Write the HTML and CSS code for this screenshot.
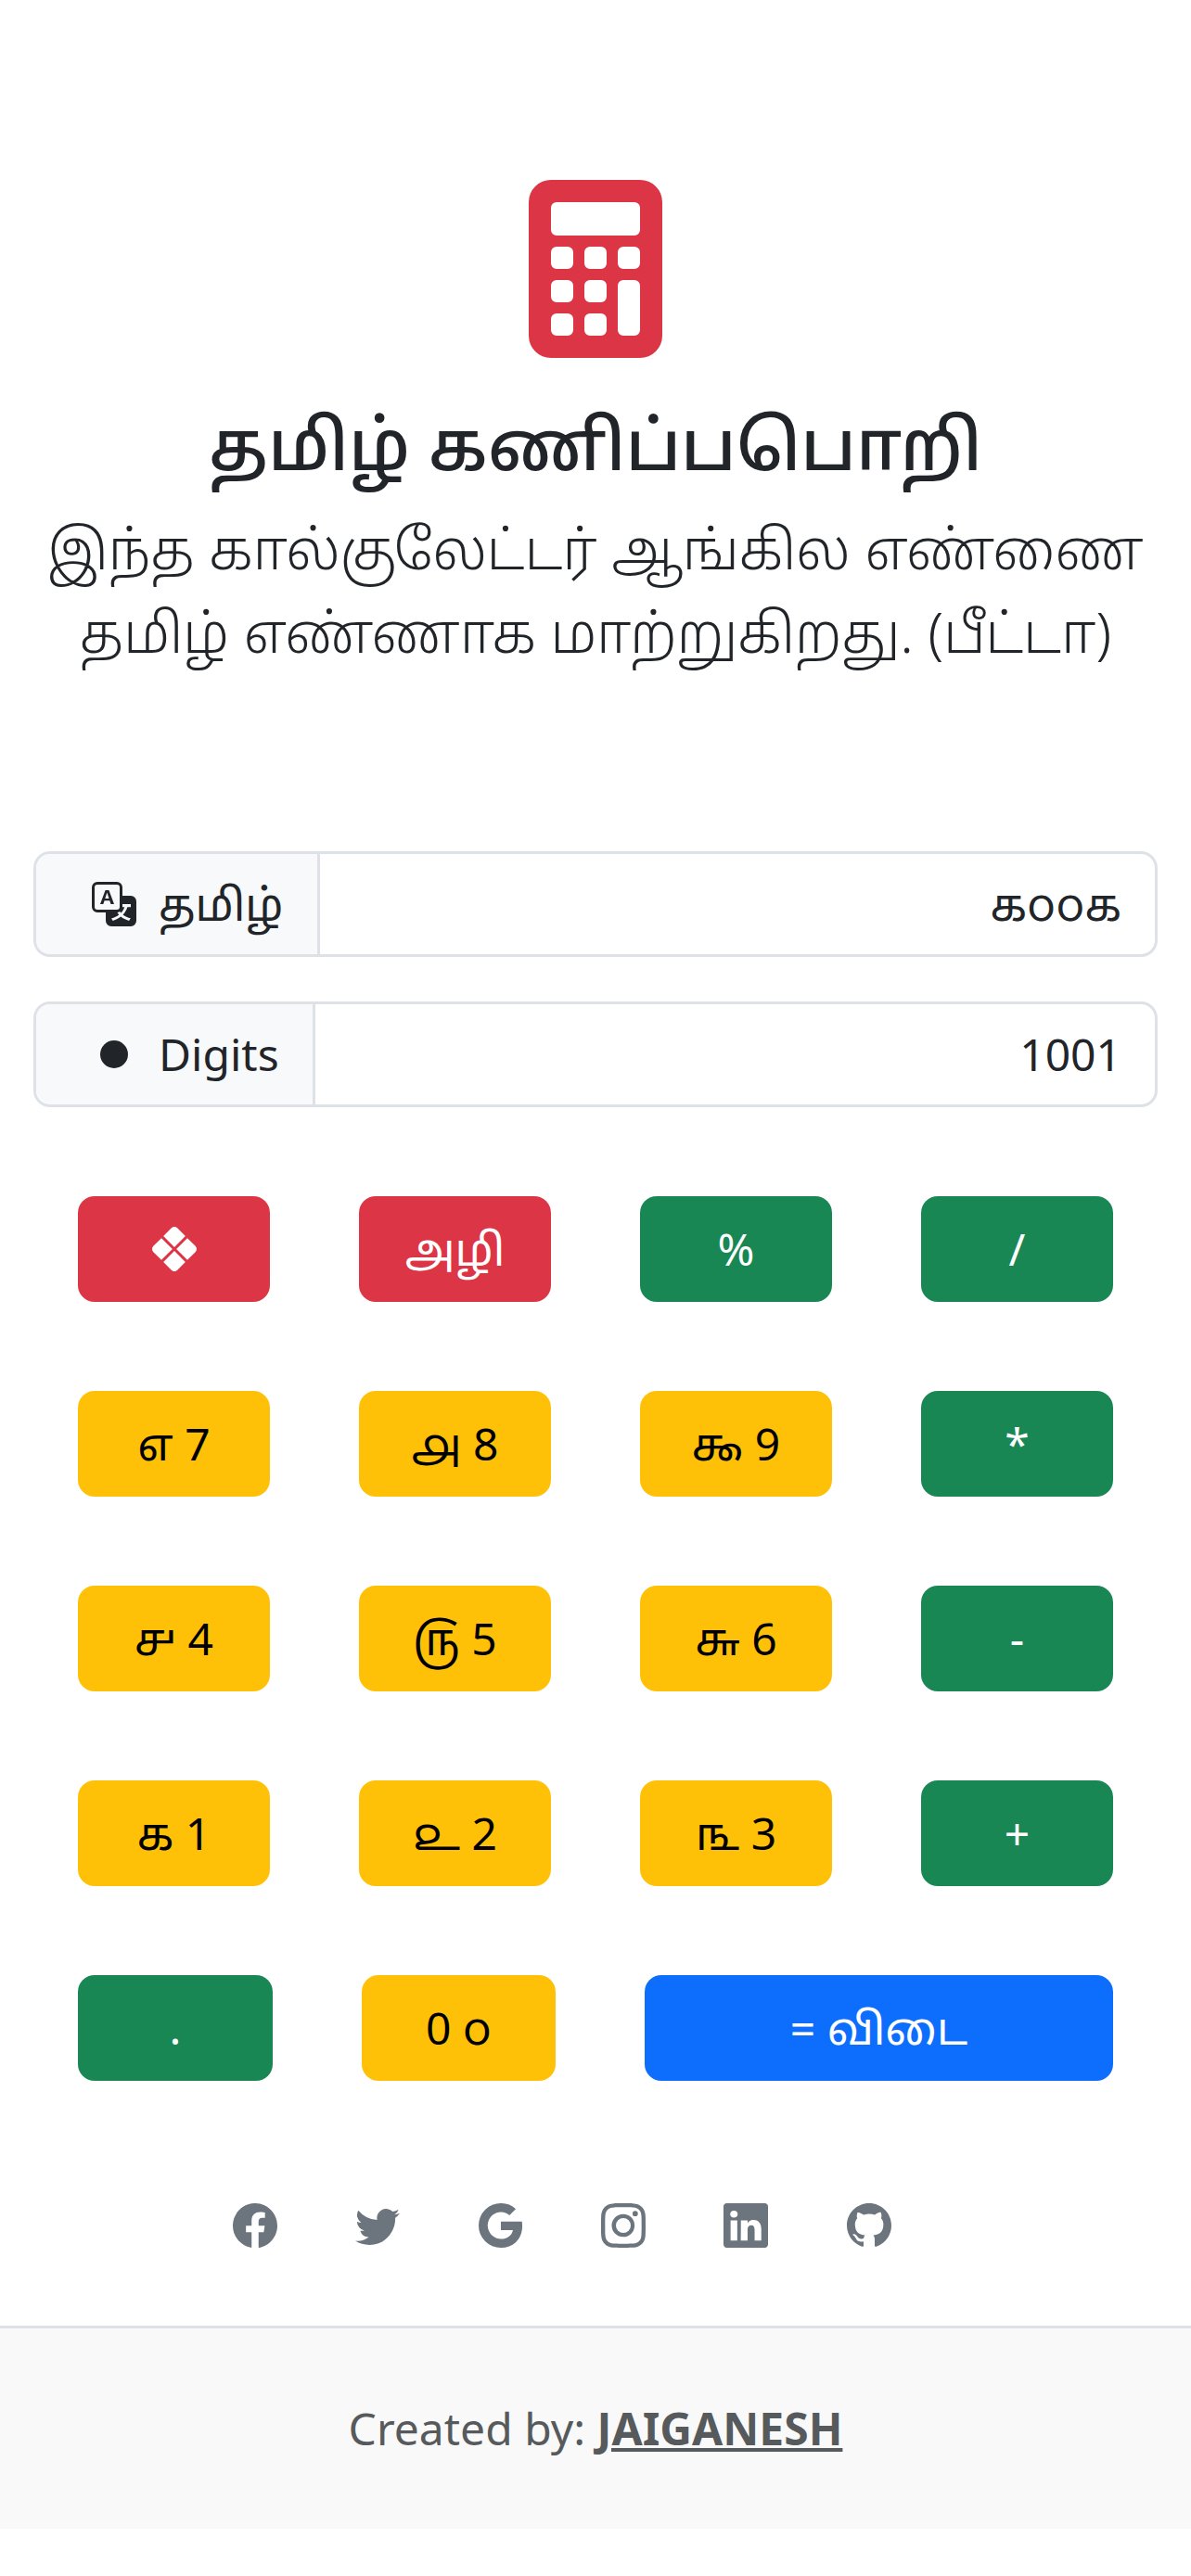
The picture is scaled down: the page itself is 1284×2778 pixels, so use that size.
FILE: index.html
```html
<!DOCTYPE html>
<html lang="ta">
<head>
<meta charset="utf-8">
<title>தமிழ் கணிப்பபொறி</title>
<link rel="stylesheet" href="styles.css">
</head>
<body>
<header class="hero">
  <svg class="hero-icon" viewBox="0 0 16 16"><path d="M2 2a2 2 0 0 1 2-2h8a2 2 0 0 1 2 2v12a2 2 0 0 1-2 2H4a2 2 0 0 1-2-2V2zm2 .5v2a.5.5 0 0 0 .5.5h7a.5.5 0 0 0 .5-.5v-2a.5.5 0 0 0-.5-.5h-7a.5.5 0 0 0-.5.5zm0 4v1a.5.5 0 0 0 .5.5h1a.5.5 0 0 0 .5-.5v-1a.5.5 0 0 0-.5-.5h-1a.5.5 0 0 0-.5.5zM4.5 9a.5.5 0 0 0-.5.5v1a.5.5 0 0 0 .5.5h1a.5.5 0 0 0 .5-.5v-1a.5.5 0 0 0-.5-.5h-1zM4 12.5v1a.5.5 0 0 0 .5.5h1a.5.5 0 0 0 .5-.5v-1a.5.5 0 0 0-.5-.5h-1a.5.5 0 0 0-.5.5zM7.5 6a.5.5 0 0 0-.5.5v1a.5.5 0 0 0 .5.5h1a.5.5 0 0 0 .5-.5v-1a.5.5 0 0 0-.5-.5h-1zM7 9.5v1a.5.5 0 0 0 .5.5h1a.5.5 0 0 0 .5-.5v-1a.5.5 0 0 0-.5-.5h-1a.5.5 0 0 0-.5.5zm.5 2.5a.5.5 0 0 0-.5.5v1a.5.5 0 0 0 .5.5h1a.5.5 0 0 0 .5-.5v-1a.5.5 0 0 0-.5-.5h-1zM10 6.5v1a.5.5 0 0 0 .5.5h1a.5.5 0 0 0 .5-.5v-1a.5.5 0 0 0-.5-.5h-1a.5.5 0 0 0-.5.5zm.5 2.5a.5.5 0 0 0-.5.5v4a.5.5 0 0 0 .5.5h1a.5.5 0 0 0 .5-.5v-4a.5.5 0 0 0-.5-.5h-1z"/></svg>
  <h1 class="title">தமிழ் கணிப்பபொறி</h1>
  <p class="lead">இந்த கால்குலேட்டர் ஆங்கில எண்ணை<br>தமிழ் எண்ணாக மாற்றுகிறது. (பீட்டா)</p>
</header>
<main>
  <section class="fields">
    <div class="field">
      <span class="addon">
        <svg class="icon" viewBox="0 0 16 16"><path d="M4.545 6.714 4.11 8H3l1.862-5h1.284L8 8H6.833l-.435-1.286H4.545zm1.634-.736L5.5 3.956h-.049l-.679 2.022H6.18z"/><path d="M0 2a2 2 0 0 1 2-2h7a2 2 0 0 1 2 2v3h3a2 2 0 0 1 2 2v7a2 2 0 0 1-2 2H7a2 2 0 0 1-2-2v-3H2a2 2 0 0 1-2-2V2zm2-1a1 1 0 0 0-1 1v7a1 1 0 0 0 1 1h7a1 1 0 0 0 1-1V2a1 1 0 0 0-1-1H2zm7.138 9.995c.193.301.402.583.63.846-.748.575-1.673 1.001-2.768 1.292.178.217.451.635.555.867 1.125-.359 2.08-.844 2.886-1.494.777.665 1.739 1.165 2.93 1.472.133-.254.414-.673.629-.89-1.125-.253-2.057-.694-2.82-1.284.681-.747 1.222-1.651 1.621-2.757H14V8h-3v1.047h.765c-.318.844-.74 1.546-1.272 2.13a6.066 6.066 0 0 1-.415-.492 1.988 1.988 0 0 1-.94.31z"/></svg>
        <span>தமிழ்</span>
      </span>
      <span class="value">௧௦௦௧</span>
    </div>
    <div class="field">
      <span class="addon">
        <svg class="icon" viewBox="0 0 16 16"><circle cx="8" cy="8" r="5"/></svg>
        <span>Digits</span>
      </span>
      <span class="value">1001</span>
    </div>
  </section>
  <section class="keys">
    <button class="key red"><svg class="icon" viewBox="0 0 16 16"><path d="M9.05.435c-.58-.58-1.52-.58-2.1 0L4.047 3.339 8 7.293l3.954-3.954L9.049.435zm3.61 3.611L8.708 8l3.954 3.954 2.904-2.905c.58-.58.58-1.519 0-2.098l-2.904-2.905zm-.706 8.615L8 8.707l-3.954 3.954 2.905 2.904c.58.58 1.519.58 2.098 0l2.905-2.904zm-8.615-.707L7.293 8 3.339 4.046.435 6.951c-.58.58-.58 1.519 0 2.098l2.904 2.905z"/></svg></button>
    <button class="key red">அழி</button>
    <button class="key green">%</button>
    <button class="key green">/</button>
    <button class="key yellow">௭ 7</button>
    <button class="key yellow">௮ 8</button>
    <button class="key yellow">௯ 9</button>
    <button class="key green">*</button>
    <button class="key yellow">௪ 4</button>
    <button class="key yellow">௫ 5</button>
    <button class="key yellow">௬ 6</button>
    <button class="key green">-</button>
    <button class="key yellow">௧ 1</button>
    <button class="key yellow">௨ 2</button>
    <button class="key yellow">௩ 3</button>
    <button class="key green">+</button>
  </section>
  <section class="keys keys-last">
    <button class="key green">.</button>
    <button class="key yellow">0 ௦</button>
    <button class="key blue">= விடை</button>
  </section>
</main>
<nav class="social">
  <svg class="icon" viewBox="0 0 16 16"><path d="M16 8.049c0-4.446-3.582-8.05-8-8.05C3.58 0-.002 3.603-.002 8.05c0 4.017 2.926 7.347 6.75 7.951v-5.625h-2.03V8.05H6.75V6.275c0-2.017 1.195-3.131 3.022-3.131.876 0 1.791.157 1.791.157v1.98h-1.009c-.993 0-1.303.621-1.303 1.258v1.51h2.218l-.354 2.326H9.25V16c3.824-.604 6.75-3.934 6.75-7.951z"/></svg>
  <svg class="icon" viewBox="0 0 16 16"><path d="M5.026 15c6.038 0 9.341-5.003 9.341-9.334 0-.14 0-.282-.006-.422A6.685 6.685 0 0 0 16 3.542a6.658 6.658 0 0 1-1.889.518 3.301 3.301 0 0 0 1.447-1.817 6.533 6.533 0 0 1-2.087.793A3.286 3.286 0 0 0 7.875 6.03a9.325 9.325 0 0 1-6.767-3.429 3.289 3.289 0 0 0 1.018 4.382A3.323 3.323 0 0 1 .64 6.575v.045a3.288 3.288 0 0 0 2.632 3.218 3.203 3.203 0 0 1-.865.115 3.23 3.23 0 0 1-.614-.057 3.283 3.283 0 0 0 3.067 2.277A6.588 6.588 0 0 1 .78 13.58a6.32 6.32 0 0 1-.78-.045A9.344 9.344 0 0 0 5.026 15z"/></svg>
  <svg class="icon" viewBox="0 0 16 16"><path d="M15.545 6.558a9.42 9.42 0 0 1 .139 1.626c0 2.434-.87 4.492-2.384 5.885h.002C11.978 15.292 10.158 16 8 16A8 8 0 1 1 8 0a7.689 7.689 0 0 1 5.352 2.082l-2.284 2.284A4.347 4.347 0 0 0 8 3.166c-2.087 0-3.86 1.408-4.492 3.304a4.792 4.792 0 0 0 0 3.063h.003c.635 1.893 2.405 3.301 4.492 3.301 1.078 0 2.004-.276 2.722-.764h-.003a3.702 3.702 0 0 0 1.599-2.431H8v-3.08h7.545z"/></svg>
  <svg class="icon" viewBox="0 0 16 16"><path d="M8 0C5.829 0 5.556.01 4.703.048 3.85.088 3.269.222 2.76.42a3.917 3.917 0 0 0-1.417.923A3.927 3.927 0 0 0 .42 2.76C.222 3.268.087 3.85.048 4.7.01 5.555 0 5.827 0 8.001c0 2.172.01 2.444.048 3.297.04.852.174 1.433.372 1.942.205.526.478.972.923 1.417.444.445.89.719 1.416.923.51.198 1.09.333 1.942.372C5.555 15.99 5.827 16 8 16s2.444-.01 3.298-.048c.851-.04 1.434-.174 1.943-.372a3.916 3.916 0 0 0 1.416-.923c.445-.445.718-.891.923-1.417.197-.509.332-1.09.372-1.942C15.99 10.445 16 10.173 16 8s-.01-2.445-.048-3.299c-.04-.851-.175-1.433-.372-1.941a3.926 3.926 0 0 0-.923-1.417A3.911 3.911 0 0 0 13.24.42c-.51-.198-1.092-.333-1.943-.372C10.443.01 10.172 0 7.998 0h.003zm-.717 1.442h.718c2.136 0 2.389.007 3.232.046.78.035 1.204.166 1.486.275.373.145.64.319.92.599.28.28.453.546.598.92.11.281.24.705.275 1.485.039.843.047 1.096.047 3.231s-.008 2.389-.047 3.232c-.035.78-.166 1.203-.275 1.485a2.47 2.47 0 0 1-.599.919c-.28.28-.546.453-.92.598-.28.11-.704.24-1.485.276-.843.038-1.096.047-3.232.047s-2.39-.009-3.233-.047c-.78-.036-1.203-.166-1.485-.276a2.478 2.478 0 0 1-.92-.598 2.48 2.48 0 0 1-.6-.92c-.109-.281-.24-.705-.275-1.485-.038-.843-.046-1.096-.046-3.233 0-2.136.008-2.388.046-3.231.036-.78.166-1.204.276-1.486.145-.373.319-.64.599-.92.28-.28.546-.453.92-.598.282-.11.705-.24 1.485-.276.738-.034 1.024-.044 2.515-.045v.002zm4.988 1.328a.96.96 0 1 0 0 1.92.96.96 0 0 0 0-1.92zm-4.27 1.122a4.109 4.109 0 1 0 0 8.217 4.109 4.109 0 0 0 0-8.217zm0 1.441a2.667 2.667 0 1 1 0 5.334 2.667 2.667 0 0 1 0-5.334z"/></svg>
  <svg class="icon" viewBox="0 0 16 16"><path d="M0 1.146C0 .513.526 0 1.175 0h13.65C15.474 0 16 .513 16 1.146v13.708c0 .633-.526 1.146-1.175 1.146H1.175C.526 16 0 15.487 0 14.854V1.146zm4.943 12.248V6.169H2.542v7.225h2.401zm-1.2-8.212c.837 0 1.358-.554 1.358-1.248-.015-.709-.52-1.248-1.342-1.248-.822 0-1.359.54-1.359 1.248 0 .694.521 1.248 1.327 1.248h.016zm4.908 8.212V9.359c0-.216.016-.432.08-.586.173-.431.568-.878 1.232-.878.869 0 1.216.662 1.216 1.634v3.865h2.401V9.25c0-2.22-1.184-3.252-2.764-3.252-1.274 0-1.845.7-2.165 1.193v.025h-.016a5.54 5.54 0 0 1 .016-.025V6.169h-2.4c.03.678 0 7.225 0 7.225h2.4z"/></svg>
  <svg class="icon" viewBox="0 0 16 16"><path d="M8 0C3.58 0 0 3.58 0 8c0 3.54 2.29 6.53 5.47 7.59.4.07.55-.17.55-.38 0-.19-.01-.82-.01-1.49-2.01.37-2.53-.49-2.69-.94-.09-.23-.48-.94-.82-1.13-.28-.15-.68-.52-.01-.53.63-.01 1.08.58 1.23.82.72 1.21 1.87.87 2.33.66.07-.52.28-.87.51-1.07-1.78-.2-3.64-.89-3.64-3.95 0-.87.31-1.59.82-2.15-.08-.2-.36-1.02.08-2.12 0 0 .67-.21 2.2.82.64-.18 1.32-.27 2-.27.68 0 1.36.09 2 .27 1.53-1.04 2.2-.82 2.2-.82.44 1.1.16 1.92.08 2.12.51.56.82 1.27.82 2.15 0 3.07-1.87 3.75-3.65 3.95.29.25.54.73.54 1.48 0 1.07-.01 1.93-.01 2.2 0 .21.15.46.55.38A8.012 8.012 0 0 0 16 8c0-4.42-3.58-8-8-8z"/></svg>
</nav>
<footer class="footer">Created by: <a class="author" href="#">JAIGANESH</a></footer>
</body>
</html>
```
FILE: styles.css
```css
* {
  box-sizing: border-box;
}

body {
  margin: 0;
  background: #fff;
  color: #212529;
  font: 400 48px/72px "Noto Sans", "Noto Sans Tamil", sans-serif;
}

.icon {
  display: block;
  flex: none;
  width: 48px;
  height: 48px;
  fill: currentColor;
}

.hero {
  display: flex;
  flex-direction: column;
  align-items: center;
  height: 918px;
  padding-top: 194px;
  text-align: center;
}

.hero-icon {
  width: 192px;
  height: 192px;
  fill: #dc3545;
}

.title {
  margin: 47px 0 22.8px;
  font: 500 75.156px/90.19px "Noto Sans", "Noto Sans Tamil", sans-serif;
}

.lead {
  margin: 0;
  font: 300 60px/90px "Noto Sans", "Noto Sans Tamil", sans-serif;
  white-space: nowrap;
}

.fields {
  display: flex;
  flex-direction: column;
  gap: 48px;
  padding: 0 36px;
}

.field {
  display: flex;
  height: 114px;
  border: 3px solid #dee2e6;
  border-radius: 18px;
  overflow: hidden;
}

.addon {
  display: flex;
  align-items: center;
  gap: 24px;
  padding: 0 36px 0 60px;
  border-right: 3px solid #dee2e6;
  background: #f8f9fa;
}

.value {
  flex: 1;
  padding: 18px 36px;
  text-align: right;
}

.keys {
  display: grid;
  grid-template-columns: repeat(4, 1fr);
  gap: 96px;
  padding: 96px 84px 0;
}

.keys-last {
  grid-template-columns: 210px 209px 1fr;
}

.key {
  display: flex;
  align-items: center;
  justify-content: center;
  height: 114px;
  padding: 0;
  border: 0;
  border-radius: 18px;
  color: #fff;
  font: inherit;
}

.red {
  background: #dc3545;
}

.green {
  background: #198754;
}

.yellow {
  background: #ffc107;
  color: #000;
}

.blue {
  background: #0d6efd;
}

.social {
  display: flex;
  gap: 84.48px;
  padding: 132px 0 84px 250.6px;
  color: #6c757d;
}

.footer {
  padding: 72px 0;
  border-top: 3px solid #dee2e6;
  background: #f9f9f9;
  color: #575a5c;
  text-align: center;
}

.author {
  color: inherit;
  font-weight: 700;
}
```
